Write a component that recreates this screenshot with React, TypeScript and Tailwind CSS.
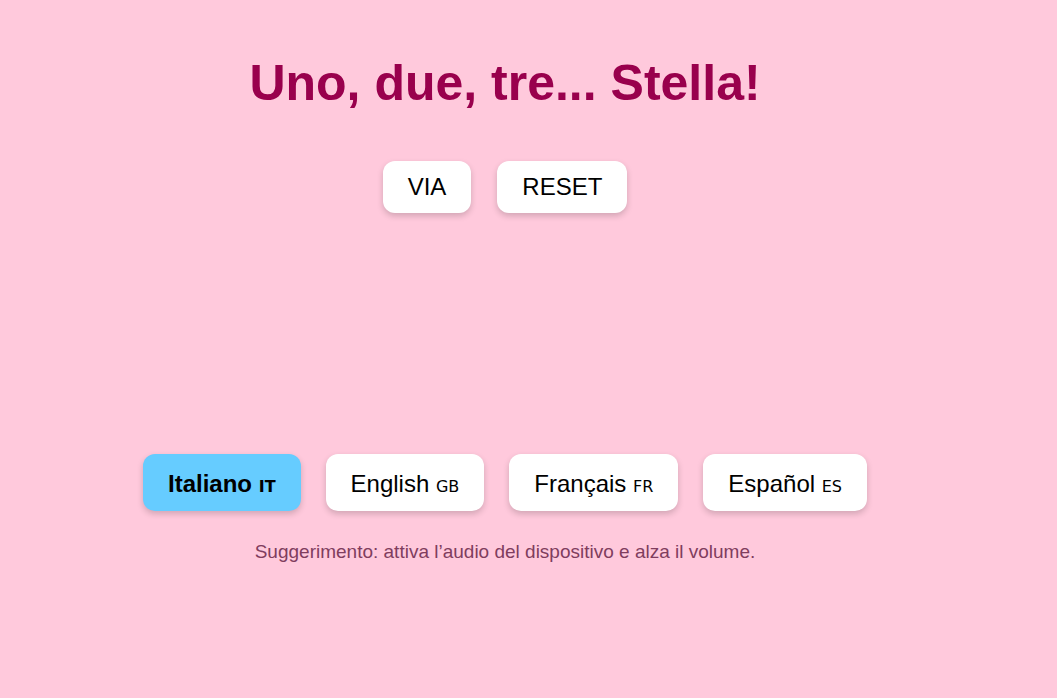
import { useState } from 'react';

const LANGS = [
  { id: 'it', label: 'Italiano', code: 'IT' },
  { id: 'en', label: 'English', code: 'GB' },
  { id: 'fr', label: 'Français', code: 'FR' },
  { id: 'es', label: 'Español', code: 'ES' },
];

export default function App() {
  const [lang, setLang] = useState('it');

  return (
    <div className="min-h-[698px] w-full bg-[#ffc9dc] font-['Liberation_Sans',Arial,sans-serif]">
      <div className="w-[1010px] flex flex-col items-center">
        <h1 className="mt-[52px] text-[50px] leading-[62px] font-bold text-[#99004d]">
          Uno, due, tre... Stella!
        </h1>

        {/* Game controls */}
        <div className="mt-[47px] flex gap-[26px]">
          <button className="px-[25px] py-3 text-2xl leading-7 text-black bg-white rounded-xl shadow-[0_3px_6px_rgba(0,0,0,0.18)]">
            VIA
          </button>
          <button className="px-[25px] py-3 text-2xl leading-7 text-black bg-white rounded-xl shadow-[0_3px_6px_rgba(0,0,0,0.18)]">
            RESET
          </button>
        </div>

        {/* Language picker */}
        <div className="mt-[241px] flex gap-[25px]">
          {LANGS.map((l) => (
            <button
              key={l.id}
              onClick={() => setLang(l.id)}
              className={
                'h-[57px] px-[25px] pt-[6px] text-2xl leading-7 text-black rounded-xl shadow-[0_3px_6px_rgba(0,0,0,0.18)] ' +
                (lang === l.id ? 'bg-[#66ccff] font-bold' : 'bg-white')
              }
            >
              {l.label}{' '}
              <span className="font-['DejaVu_Sans',sans-serif] text-[16px]">{l.code}</span>
            </button>
          ))}
        </div>

        <p className="mt-[27px] text-[19px] leading-7 text-[#803d5e]">
          Suggerimento: attiva l’audio del dispositivo e alza il volume.
        </p>
      </div>
    </div>
  );
}
